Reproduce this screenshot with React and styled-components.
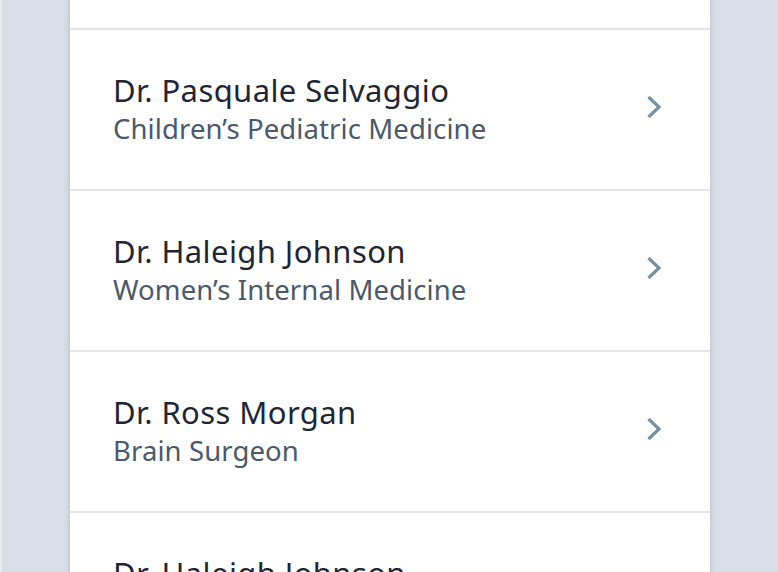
import React from 'react';
import styled, { createGlobalStyle } from 'styled-components';

const GlobalStyle = createGlobalStyle`
  html, body {
    margin: 0;
    padding: 0;
    height: 100%;
    overflow: hidden;
    background-color: #d8dde6;
  }
  body {
    font-family: "Noto Sans", "Open Sans", "Liberation Sans", sans-serif;
  }
`;

const Page = styled.div`
  width: 778px;
  height: 572px;
  overflow: hidden;
  background-color: #d8dde6;
  border-left: 2px solid #e8ebf0;
  box-sizing: border-box;
  display: flex;
  justify-content: flex-start;
  padding-left: 68px;
`;

const Panel = styled.div`
  width: 640px;
  margin-top: -131px;
  background-color: #fff;
  box-shadow: 0 0 5px rgba(60, 70, 90, 0.25);
  align-self: flex-start;
`;

const Row = styled.div`
  height: 159px;
  border-bottom: 2px solid #e4e5e8;
  display: flex;
  align-items: center;
  justify-content: space-between;
  padding: 0 46px 0 43px;
`;

const Info = styled.div`
  display: flex;
  flex-direction: column;
  margin-top: -1px;
`;

const Name = styled.div`
  font-size: 31px;
  line-height: 40px;
  letter-spacing: 0.4px;
  color: #1f2633;
`;

const Specialty = styled.div`
  font-size: 27.5px;
  line-height: 38px;
  letter-spacing: 0.1px;
  color: #4b5969;
  margin-top: 0;
`;

const ChevronIcon = styled.svg`
  margin-top: -5px;
`;

const Chevron = () => (
  <ChevronIcon width="20" height="26" viewBox="0 0 20 26">
    <path d="M4.5 3 L15 13 L4.5 23" fill="none" stroke="#7890a3" strokeWidth="3.2" />
  </ChevronIcon>
);

const doctors = [
  { name: 'Dr. Maria Alvarez', specialty: 'Family Medicine' },
  { name: 'Dr. Pasquale Selvaggio', specialty: 'Children’s Pediatric Medicine' },
  { name: 'Dr. Haleigh Johnson', specialty: 'Women’s Internal Medicine' },
  { name: 'Dr. Ross Morgan', specialty: 'Brain Surgeon' },
  { name: 'Dr. Haleigh Johnson', specialty: 'Women’s Internal Medicine' },
];

const App = () => (
  <Page>
    <GlobalStyle />
    <Panel>
      {doctors.map((d, i) => (
        <Row key={i}>
          <Info>
            <Name>{d.name}</Name>
            <Specialty>{d.specialty}</Specialty>
          </Info>
          <Chevron />
        </Row>
      ))}
    </Panel>
  </Page>
);

export default App;
